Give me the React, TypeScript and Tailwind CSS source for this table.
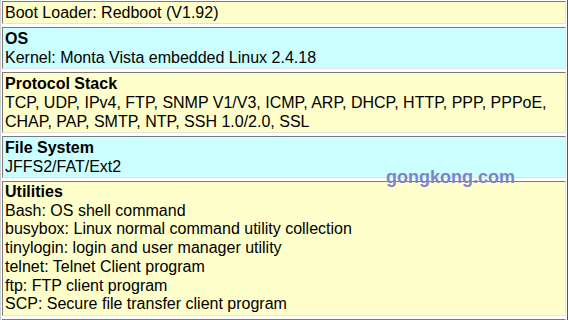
import React from "react";

const Cell = ({
  bg,
  lh = "leading-[19px]",
  children,
}: {
  bg: string;
  lh?: string;
  children: React.ReactNode;
}) => (
  <div
    className={`border border-t-[#7a7a7a] border-l-[#7a7a7a] border-b-[#e2e2e2] border-r-[#e2e2e2] px-[2px] py-[1px] ${lh} ${bg}`}
  >
    {children}
  </div>
);

export default function App() {
  return (
    <div className="relative w-[568px] h-[320px] overflow-hidden bg-white text-black text-[16px] font-['Arial','Liberation_Sans',sans-serif]">
      <div className="border-l border-r border-l-[#d0d0d0] border-r-[#555555] px-[1px] pt-[1px] flex flex-col gap-[3px]">
        <Cell bg="bg-[#ffffcc]">Boot Loader: Redboot (V1.92)</Cell>
        <Cell bg="bg-[#ccffff]">
          <div className="font-bold">OS</div>
          <div>Kernel: Monta Vista embedded Linux 2.4.18</div>
        </Cell>
        <Cell bg="bg-[#ffffcc]">
          <div className="font-bold">Protocol Stack</div>
          <div>
            TCP, UDP, IPv4, FTP, SNMP V1/V3, ICMP, ARP, DHCP, HTTP, PPP, PPPoE,
            <br />
            CHAP, PAP, SMTP, NTP, SSH 1.0/2.0, SSL
          </div>
        </Cell>
        <Cell bg="bg-[#ccffff]">
          <div className="font-bold">File System</div>
          <div>JFFS2/FAT/Ext2</div>
        </Cell>
        <Cell bg="bg-[#ffffcc]" lh="leading-[18.7px]">
          <div className="font-bold">Utilities</div>
          <div>Bash: OS shell command</div>
          <div>busybox: Linux normal command utility collection</div>
          <div>tinylogin: login and user manager utility</div>
          <div>telnet: Telnet Client program</div>
          <div>ftp: FTP client program</div>
          <div>SCP: Secure file transfer client program</div>
        </Cell>
        <Cell bg="bg-[#ccffff]">
          <div className="font-bold">&nbsp;</div>
        </Cell>
      </div>
      <div className="absolute left-[386px] top-[167px] text-[18px] leading-[20px] font-bold text-[#7d85c7] font-['Arial','Liberation_Sans',sans-serif]">
        gongkong.com
      </div>
    </div>
  );
}
